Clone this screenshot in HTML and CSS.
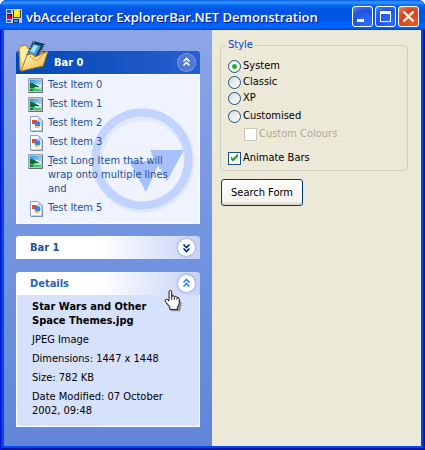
FILE: index.html
```html
<!DOCTYPE html>
<html lang="en">
<head>
<meta charset="utf-8">
<title>vbAccelerator ExplorerBar.NET Demonstration</title>
<link rel="stylesheet" href="styles.css">
</head>
<body>
<svg class="defs" aria-hidden="true">
  <defs>
    <linearGradient id="sky" x1="0" y1="0" x2="1" y2="1"><stop offset="0" stop-color="#2f8fe0"/><stop offset="1" stop-color="#d8f4ff"/></linearGradient>
    <linearGradient id="gold" x1="0" y1="0" x2="1" y2="1"><stop offset="0" stop-color="#fffbd0"/><stop offset="1" stop-color="#efb93a"/></linearGradient>
    <symbol id="photo" viewBox="0 0 16 16">
      <path d="M0 0h15v15H0z" fill="#98a5a8"/><path d="M14 1h1v14H1v-1h13z" fill="#6c6c6c"/><path d="M1 1h13v13H1z" fill="#b9c6c4"/>
      <path d="M2 2h11v11H2z" fill="url(#sky)"/>
      <path d="M8 6h2v1h3v2H7z" fill="#f4fcff"/>
      <path d="M2 5h3v1h2v1h2v1h2v1h2v1H2z" fill="#0c6b38"/>
      <path d="M2 10h11v3H2z" fill="#4ebf66"/><path d="M6 9h7v2H8z" fill="#9ce9dc"/><path d="M2 11h3v2H2z" fill="#19783b"/>
    </symbol>
    <symbol id="doc" viewBox="0 0 16 16">
      <path d="M3 1h8l4 4v11H3z" fill="#777f99"/><path d="M2.500 .5h7.500l4 4v10.500H2.500z" fill="#f8fbff" stroke="#8ca4cf"/>
      <path d="M10 1v4h4z" fill="#b6cdf1"/><path d="M4 4h5v4H4z" fill="#f04523"/><circle cx="9.500" cy="8" r="2.900" fill="#2b86ee"/><path d="M7 10h4v2H7z" fill="#f7c32c"/>
    </symbol>
    <symbol id="chevrons" viewBox="0 0 17 17">
      <path d="M5.500 7.500l3-3 3 3M5.500 11.500l3-3 3 3" fill="none" stroke="currentColor" stroke-width="1.700"/>
    </symbol>
  </defs>
</svg>
<div class="window">
  <header class="titlebar">
    <svg class="app-icon" viewBox="0 0 16 16" aria-hidden="true">
      <path d="M0 0h16v14H0z" fill="#b9cbe6"/><path d="M1 1h4v3H1zM1 11h4v2H1z" fill="#2758c8"/>
      <path d="M1 5h5v5H1z" fill="#111"/><path d="M1 6h4v4H1z" fill="#e4003a"/>
      <path d="M7 1h8v8H7z" fill="#494000"/><path d="M8 1h6v7H8z" fill="#ffe900"/><path d="M9 2h3v3H9z" fill="#fff98a"/>
      <path d="M7 10h6v4H7z" fill="#082a80"/><path d="M8 11h4v2H8z" fill="#00bde8"/>
    </svg>
    <h1>vbAccelerator ExplorerBar.NET Demonstration</h1>
    <div class="controls">
      <button type="button" class="control" aria-label="Minimize"><svg viewBox="0 0 19 19"><path d="M4 12h7v3H4z" fill="#fff"/></svg></button>
      <button type="button" class="control" aria-label="Maximize"><svg viewBox="0 0 19 19"><path d="M4 4h11v11H4zM5 7v7h9V7z" fill="#fff" fill-rule="evenodd"/></svg></button>
      <button type="button" class="control close" aria-label="Close"><svg viewBox="0 0 19 19"><path d="M4.500 4.500l10 10M14.500 4.500l-10 10" stroke="#fff" stroke-width="2.400"/></svg></button>
    </div>
  </header>
  <div class="content">
    <aside class="explorer">
      <section class="bar primary">
        <button type="button" class="bar-head" aria-expanded="true">
          <span>Bar 0</span><svg class="toggle"><use href="#chevrons"/></svg>
        </button>
        <svg class="folder" viewBox="0 0 32 32" aria-hidden="true">
          <path d="M2 7q0-2 2-2l5-1 3 4 12-2 2 8-20 16-3-1z" fill="#f4cd65" stroke="#b18424"/>
          <path d="M3 8l5-3 3 4-5 19z" fill="#fff0a8"/>
          <path d="M16 0l12 3-8 16-11-4z" fill="#12345a"/><path d="M17 3l7 2-6 11-7-3z" fill="#3e9bd8"/><path d="M17 4l4 1-4 7-4-2z" fill="#a7e1fa"/>
          <path d="M17 1l-7 13M27 4l-8 14" stroke="#e3f2ff" stroke-dasharray="1 2" fill="none"/>
          <path d="M10 14l5-1 3 3 13-6-5 15L4 30z" fill="url(#gold)" stroke="#a87820"/>
          <path d="M13 15l6 5 8-7" fill="none" stroke="#d89440"/>
        </svg>
        <div class="bar-body">
          <svg class="watermark" viewBox="0 0 104 106" aria-hidden="true">
            <circle cx="52" cy="53" r="46" fill="none" stroke="#e1e9ff" stroke-width="11"/>
            <circle cx="51" cy="51" r="46.500" fill="none" stroke="#c3d3ff" stroke-width="8"/>
            <path d="M38 53h31l-14 31z" fill="#a6bfff"/><path d="M59 42h34L76 73z" fill="#a9c1ff"/>
            <path d="M60 45l9 16" fill="none" stroke="#b4c9ff"/>
          </svg>
          <ul class="items">
            <li><a href="#"><svg><use href="#photo"/></svg><span>Test Item 0</span></a></li>
            <li><a href="#"><svg><use href="#photo"/></svg><span>Test Item 1</span></a></li>
            <li><a href="#"><svg><use href="#doc"/></svg><span>Test Item 2</span></a></li>
            <li><a href="#"><svg><use href="#doc"/></svg><span>Test Item 3</span></a></li>
            <li><a href="#"><svg><use href="#photo"/></svg><span class="mnemonic">Test Long Item that will wrap onto multiple lines and</span></a></li>
            <li><a href="#"><svg><use href="#doc"/></svg><span>Test Item 5</span></a></li>
          </ul>
        </div>
      </section>
      <section class="bar collapsed">
        <button type="button" class="bar-head" aria-expanded="false">
          <span>Bar 1</span><svg class="toggle down"><use href="#chevrons"/></svg>
        </button>
      </section>
      <section class="bar hot">
        <button type="button" class="bar-head" aria-expanded="true">
          <span>Details</span><svg class="toggle"><use href="#chevrons"/></svg>
        </button>
        <svg class="pointer" viewBox="0 0 20 26" aria-hidden="true">
          <path d="M7 5v10l-3-2-2 2 4 6 2 3h10l2-9-3-5-6-2V5z" fill="#000" opacity=".35"/>
          <path d="M5.500 12V2q0-1.500 1.500-1.500T8.500 2v5q2-1 3 .5 2-1 3 .7 2.500-.5 2.500 2.300v5l-2 4v2.500H6.500V19L1 12.500q0-2 2-2 1.500.5 2.500 2z" fill="#fff" stroke="#000"/>
          <path d="M8.500 7v4M11.500 8v3M14.500 9v2" stroke="#000"/>
        </svg>
        <div class="bar-body details">
          <h2>Star Wars and Other Space Themes.jpg</h2>
          <p>JPEG Image</p>
          <p>Dimensions: 1447 x 1448</p>
          <p>Size: 782 KB</p>
          <p>Date Modified: 07 October 2002, 09:48</p>
        </div>
      </section>
    </aside>
    <main class="panel">
      <form>
        <fieldset>
          <legend>Style</legend>
          <label><input type="radio" name="style" checked>System</label>
          <label><input type="radio" name="style">Classic</label>
          <label><input type="radio" name="style">XP</label>
          <label class="customised"><input type="radio" name="style">Customised</label>
          <label class="colours"><input type="checkbox" disabled>Custom Colours</label>
          <label class="animate"><input type="checkbox" checked>Animate Bars</label>
        </fieldset>
        <button type="button" class="search">Search Form</button>
      </form>
    </main>
  </div>
</div>
</body>
</html>
```
FILE: styles.css
```css
* { box-sizing: border-box; }
body { margin: 0; background: #fff; font: 11px/14px "DejaVu Sans Condensed", "DejaVu Sans", sans-serif; font-stretch: condensed; color: #000; }
button { font: inherit; margin: 0; padding: 0; border: 0; }
h1, h2, p, ul { margin: 0; padding: 0; }
.defs { position: absolute; width: 0; height: 0; }

.window {
  display: flex; flex-direction: column; min-height: 100vh;
  padding: 0 4px 4px; border-radius: 7px 7px 0 0; overflow: hidden;
  background: #0048f1;
  box-shadow: inset 1px 0 #0016c9, inset -1px -1px #00138c, inset -2px -2px #001ea8, inset 2px 0 #0334dc;
}
.titlebar {
  display: flex; align-items: center; height: 30px; margin: 0 -4px; padding: 3px 6px 0 6px;
  background: linear-gradient(#0058e6 0, #3a93ff 2px, #288eff 3px, #0062ed 6px, #0054e3 10px, #0055e5 18px, #0066ff 26px, #0061f5 28px, #003dd7 30px);
}
.app-icon { width: 16px; height: 16px; flex: none; }
h1 { flex: 1; padding-left: 4px; font: 600 13px/20px "Open Sans", sans-serif; color: #fff; text-shadow: 1px 1px #0a1883; white-space: nowrap; }
.controls { display: flex; gap: 2px; }
.control { width: 21px; height: 21px; border: 1px solid #fff; border-radius: 3px; background: radial-gradient(circle at 70% 80%, #2a70ff, #2254e0 60%, #5a86ee); }
.control svg { display: block; width: 19px; height: 19px; }
.close { background: radial-gradient(circle at 70% 80%, #e85a27, #d5451f 60%, #ec8d70); }

.content { flex: 1; display: flex; }
.explorer { flex: 0 0 208px; display: flex; flex-direction: column; gap: 12px; padding: 21px 12px 12px; background: linear-gradient(#8ca6e6, #7394e0 50%, #6385d8); }
.bar { position: relative; color: #215097; }
.collapsed { padding-bottom: 1px; }
.bar-head {
  display: flex; align-items: center; justify-content: space-between; width: 100%; height: 23px; padding: 0 5px 0 14px;
  border-radius: 3px 3px 0 0; background: linear-gradient(90deg, #fff 0, #fff 45%, #c6d3f7); color: #215097; font-weight: bold;
}
.toggle { width: 17px; height: 17px; border-radius: 50%; background: #fff; color: #002a9c; box-shadow: 0 0 2px 1px #a3b1dc; }
.down { transform: rotate(180deg); }
.hot .bar-head { color: #2862c4; }
.hot .toggle { color: #3c83f5; }
.primary .bar-head { padding-left: 38px; background: linear-gradient(90deg, #0049b5, #2a5dcf); color: #fff; }
.primary .toggle { background: #4e78d2; color: #fff; box-shadow: 0 0 0 1px #799bdc; }
.folder { position: absolute; left: 1px; top: -10px; width: 32px; height: 32px; }
.bar-body { position: relative; padding: 3px 11px 8px; border: 1px solid #fff; background: #eef3ff; }
.watermark { position: absolute; right: 4px; bottom: 9px; width: 104px; height: 106px; }
.items { position: relative; display: flex; flex-direction: column; gap: 5px; list-style: none; }
.items a { display: flex; gap: 4px; padding-right: 14px; color: #215097; text-decoration: none; }
.items svg { flex: none; width: 16px; height: 16px; margin-bottom: -2px; }
.mnemonic::first-letter { text-decoration: underline; }
.details { display: flex; flex-direction: column; gap: 5px; padding: 5px 24px 8px 15px; border-top: 0; background: #d6e1fc; color: #000; }
h2 { font: inherit; font-weight: bold; }
.pointer { position: absolute; left: 148px; top: 18px; width: 18px; height: 23px; z-index: 1; }

.panel { flex: 1; padding: 8px 13px 12px 8px; background: #ece9d8; }
fieldset { margin: 0; padding: 6px 7px 4px; min-width: 0; border: 1px solid #d0d0bf; border-radius: 4px; }
legend { padding: 0 2px; margin-left: -2px; color: #0046d5; }
label { display: flex; align-items: center; gap: 2px; height: 16px; }
input { appearance: none; flex: none; width: 13px; height: 13px; margin: 0; border: 1px solid #1c5180; background: linear-gradient(135deg, #dcdcd7, #fff); }
input[type="radio"] { border-radius: 50%; }
input[type="radio"]:checked { background: radial-gradient(circle, #21a121 0, #38b838 2px, #f4f4ef 3px); }
input[type="checkbox"]:checked { display: grid; place-items: center; background: #f8f8f5; }
input[type="checkbox"]:checked::before { content: ""; width: 9px; height: 9px; background: #21a121; clip-path: polygon(1px 3px, 3px 5px, 8px 0, 8px 3px, 3px 8px, 1px 6px); }
.customised { margin-top: 2px; }
.colours { margin: 2px 0 0 16px; color: #aca899; }
.colours input { border-color: #cac8bb; background: #fff; }
.animate { margin-top: 8px; }
.search { display: block; margin: 8px 0 0 1px; height: 27px; padding: 0 9px; border: 1px solid #003c74; border-radius: 3px; background: linear-gradient(#fff, #f4f3ee 85%, #d8d2c6); color: #000; }
```
